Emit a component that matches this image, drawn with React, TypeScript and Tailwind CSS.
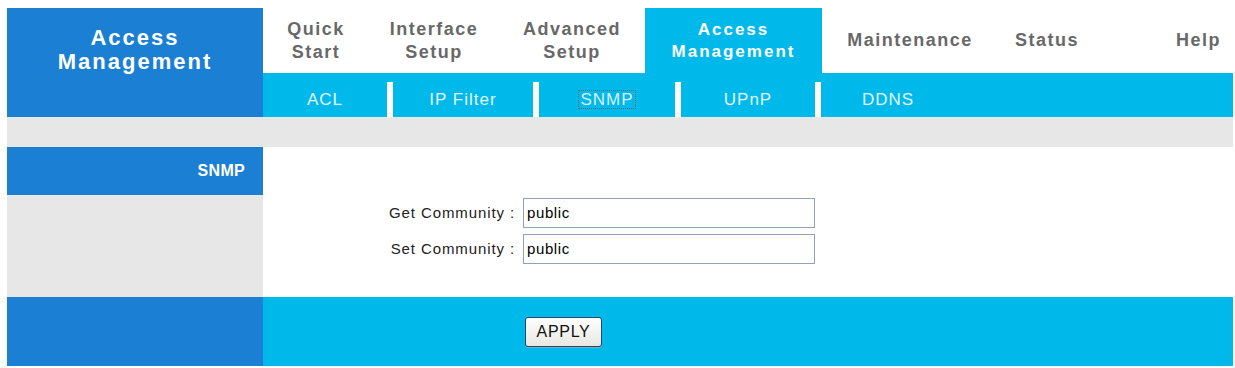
const tabs = [
  { label: ['Quick', 'Start'], w: 'w-[106px]' },
  { label: ['Interface', 'Setup'], w: 'w-[130px]' },
  { label: ['Advanced', 'Setup'], w: 'w-[146px]' },
];

const tabsRight = [
  { label: 'Maintenance', w: 'w-[176px]' },
  { label: 'Status', w: 'w-[98px]' },
];

const subItems = [
  { label: 'ACL', w: 'w-[124px]' },
  { label: 'IP Filter', w: 'w-[140px]' },
  { label: 'SNMP', w: 'w-[136px]', focused: true },
  { label: 'UPnP', w: 'w-[134px]' },
  { label: 'DDNS', w: 'w-[134px]' },
];

function SubNav() {
  return (
    <div className="h-[44px] bg-[#00b9eb] pt-[9px] flex">
      {subItems.map((item, i) => (
        <div key={item.label} className="flex h-[35px]">
          {i > 0 && <div className="w-[6px] h-[35px] bg-white" />}
          <div
            className={`${item.w} h-[35px] flex items-center justify-center text-[17px] tracking-[1px] text-[#e4f6fd]`}
          >
            {item.focused ? (
              <span className="outline-1 outline-dotted outline-[#52707c] px-[1px] leading-[17px] text-[#dceff6]">
                {item.label}
              </span>
            ) : (
              item.label
            )}
          </div>
        </div>
      ))}
    </div>
  );
}

function TopTabs() {
  return (
    <div className="h-[65px] flex bg-white text-[18px] font-bold leading-[23px] tracking-[1.5px] text-[#686868]">
      {tabs.map((t) => (
        <div key={t.label[0]} className={`${t.w} flex flex-col items-center justify-center`}>
          <span>{t.label[0]}</span>
          <span>{t.label[1]}</span>
        </div>
      ))}
      <div className="w-[177px] bg-[#00b9eb] text-white text-[17px] tracking-[2px] leading-[22px] flex flex-col items-center justify-center">
        <span>Access</span>
        <span>Management</span>
      </div>
      {tabsRight.map((t) => (
        <div key={t.label} className={`${t.w} flex items-center justify-center`}>
          {t.label}
        </div>
      ))}
      <div className="flex-1 flex items-center justify-end pr-[12px]">Help</div>
    </div>
  );
}

function Field({ label, value }: { label: string; value: string }) {
  return (
    <div className="flex items-center">
      <div className="w-[260px] text-right pr-[8px] text-[15px] tracking-[0.9px] text-[#222]">{label}</div>
      <div className="w-[292px] h-[30px] border border-[#8fa3b6] bg-white flex items-center pl-[3px] text-[15px] tracking-[0.6px] text-black">
        {value}
      </div>
    </div>
  );
}

export default function App() {
  return (
    <div className="w-[1235px] h-[368px] bg-white pt-[8px] pl-[7px] font-['Liberation_Sans',Arial,sans-serif]">
      <div className="w-[1226px]">
        <div className="flex">
          <div className="w-[256px] h-[109px] shrink-0 bg-[#1b7fd3] text-white font-bold text-[22px] leading-[24px] tracking-[2px] text-center pt-[18px]">
            Access
            <br />
            Management
          </div>
          <div className="flex-1 flex flex-col">
            <TopTabs />
            <SubNav />
          </div>
        </div>

        <div className="h-[30px] bg-[#e7e7e7]" />

        {/* section title */}
        <div className="flex h-[48px]">
          <div className="w-[256px] bg-[#1b7fd3] flex items-center justify-end pr-[18px] text-white font-bold text-[16px] tracking-[0.3px]">
            SNMP
          </div>
          <div className="flex-1 bg-white" />
        </div>

        {/* form */}
        <div className="flex h-[102px]">
          <div className="w-[256px] bg-[#e7e7e7]" />
          <div className="flex-1 bg-white pt-[3px] flex flex-col gap-[6px]">
            <Field label="Get Community :" value="public" />
            <Field label="Set Community :" value="public" />
          </div>
        </div>

        {/* footer */}
        <div className="flex h-[69px]">
          <div className="w-[256px] bg-[#1b7fd3]" />
          <div className="flex-1 bg-[#00b9eb] flex items-center pl-[262px]">
            <button className="w-[77px] h-[30px] rounded-[3px] border border-[#27476a] bg-gradient-to-b from-white to-[#e8e7e1] shadow-[0_1px_0_#7aa9c2] text-[16px] tracking-[0.7px] text-[#111]">
              APPLY
            </button>
          </div>
        </div>
      </div>
    </div>
  );
}
